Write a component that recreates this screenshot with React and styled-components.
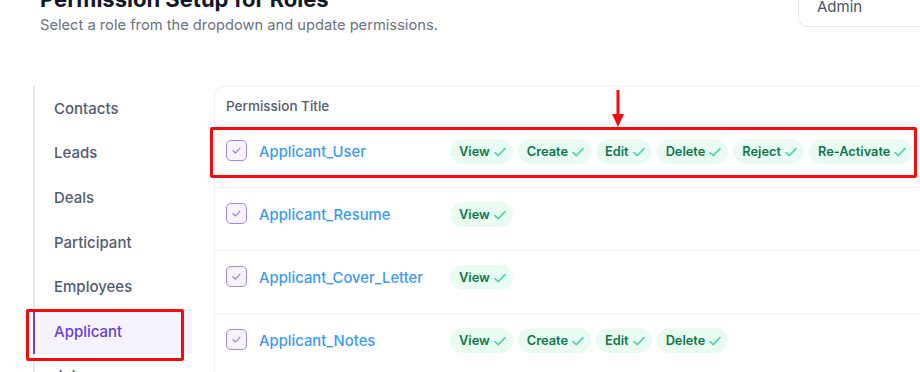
import React from 'react';
import styled, { createGlobalStyle } from 'styled-components';

const GlobalStyle = createGlobalStyle`
  body {
    margin: 0;
    background: #ffffff;
    font-family: Inter, "Noto Sans", Arial, sans-serif;
    overflow: hidden;
  }
`;

const Page = styled.div`
  width: 920px;
  height: 372px;
  overflow: hidden;
  position: relative;
  background: #fff;
`;

const Header = styled.header`
  display: flex;
  justify-content: space-between;
  align-items: flex-start;
  padding-left: 40px;
`;

const TitleBlock = styled.div`
  margin-top: -16px;
`;

const Title = styled.h1`
  margin: 0;
  font-size: 22px;
  line-height: 30px;
  font-weight: 700;
  color: #111827;
`;

const Subtitle = styled.p`
  margin: 0;
  font-size: 14.7px;
  line-height: 22px;
  color: #6b7280;
`;

const RoleSelect = styled.div`
  margin-top: -14px;
  margin-right: -40px;
  width: 162px;
  height: 41px;
  box-sizing: border-box;
  border: 1px solid #e5e7eb;
  border-radius: 9px;
  padding: 10px 0 0 18px;
  font-size: 15px;
  color: #4b5563;
`;

const Body = styled.div`
  display: flex;
  gap: 22px;
  margin-top: 50px;
  padding-left: 33px;
`;

const Sidebar = styled.nav`
  width: 159px;
  flex: none;
  border-left: 2px solid #e8e9ef;
  height: 300px;
  box-sizing: border-box;
`;

const NavItem = styled.div`
  height: 44.6px;
  display: flex;
  align-items: center;
  padding-left: 19px;
  margin-left: -2px;
  border-left: 2px solid ${p => (p.$active ? '#6d3fd6' : 'transparent')};
  background: ${p => (p.$active ? '#f6f3fe' : 'transparent')};
  color: ${p => (p.$active ? '#6b3fd4' : '#535b70')};
  font-size: 15px;
  font-weight: 500;
`;

const Table = styled.div`
  flex: 1;
  border: 1px solid #eef0f5;
  border-right: none;
  border-top-left-radius: 10px;
  height: 320px;
`;

const HeadRow = styled.div`
  height: 37px;
  display: flex;
  align-items: center;
  padding-left: 11px;
  font-size: 13.5px;
  font-weight: 500;
  color: #555d6e;
  border-bottom: 1px solid #eef0f5;
`;

const Row = styled.div`
  height: 63px;
  box-sizing: border-box;
  display: flex;
  align-items: center;
  padding: 0 0 9px 11px;
  border-bottom: 1px solid #eef0f5;
`;

const NameCell = styled.div`
  width: 224px;
  flex: none;
  display: flex;
  align-items: center;
  gap: 12px;
`;

const Check = styled.span`
  width: 21px;
  height: 21px;
  box-sizing: border-box;
  margin-top: -2px;
  border: 1.5px solid #a585e8;
  border-radius: 5px;
  background: #f7f4ff;
  display: flex;
  align-items: center;
  justify-content: center;
`;

const Name = styled.span`
  font-size: 14.8px;
  font-weight: 500;
  color: #3a9af4;
`;

const Tags = styled.div`
  display: flex;
  gap: 5px;
  flex: none;
`;

const Tag = styled.span`
  display: inline-flex;
  align-items: center;
  gap: 4px;
  height: 25px;
  padding: 0 7px 0 9px;
  border-radius: 13px;
  background: #eafbf2;
  color: #0c774b;
  font-size: 12.8px;
  font-weight: 600;
  white-space: nowrap;
  flex: none;
`;

const Annotation = styled.div`
  position: absolute;
  border: 3px solid #f20d0d;
  border-radius: 2px;
  box-sizing: border-box;
  pointer-events: none;
`;

const SideMark = styled(Annotation)`
  left: 26px;
  top: 309px;
  width: 158px;
  height: 52px;
`;

const RowMark = styled(Annotation)`
  left: 210px;
  top: 127px;
  width: 707px;
  height: 51px;
`;

const Arrow = styled.svg`
  position: absolute;
  left: 611px;
  top: 90px;
`;

const BoxCheck = () => (
  <svg width="11" height="11" viewBox="0 0 12 12" fill="none">
    <path d="M2.2 6.3 L4.8 8.8 L9.8 3.4" stroke="#9d86d9" strokeWidth="1.4" strokeLinecap="round" strokeLinejoin="round" />
  </svg>
);

const TagCheck = () => (
  <svg width="12" height="12" viewBox="0 0 12 12" fill="none">
    <path d="M1 6.6 L4.3 9.6 L11 2.6" stroke="#55d3b2" strokeWidth="1.7" strokeLinecap="round" strokeLinejoin="round" />
  </svg>
);

const navItems = ['Contacts', 'Leads', 'Deals', 'Participant', 'Employees', 'Applicant', 'Jobs'];

const permissions = [
  { name: 'Applicant_User', actions: ['View', 'Create', 'Edit', 'Delete', 'Reject', 'Re-Activate'] },
  { name: 'Applicant_Resume', actions: ['View'] },
  { name: 'Applicant_Cover_Letter', actions: ['View'] },
  { name: 'Applicant_Notes', actions: ['View', 'Create', 'Edit', 'Delete'] },
];

export default function App() {
  return (
    <Page>
      <GlobalStyle />
      <Header>
        <TitleBlock>
          <Title>Permission Setup for Roles</Title>
          <Subtitle>Select a role from the dropdown and update permissions.</Subtitle>
        </TitleBlock>
        <RoleSelect>Admin</RoleSelect>
      </Header>
      <Body>
        <Sidebar>
          {navItems.map(item => (
            <NavItem key={item} $active={item === 'Applicant'}>{item}</NavItem>
          ))}
        </Sidebar>
        <Table>
          <HeadRow>Permission Title</HeadRow>
          {permissions.map(p => (
            <Row key={p.name}>
              <NameCell>
                <Check><BoxCheck /></Check>
                <Name>{p.name}</Name>
              </NameCell>
              <Tags>
                {p.actions.map(a => (
                  <Tag key={a}>
                    {a}
                    <TagCheck />
                  </Tag>
                ))}
              </Tags>
            </Row>
          ))}
        </Table>
      </Body>
      <SideMark />
      <RowMark />
      <Arrow width="14" height="38" viewBox="0 0 14 38">
        <rect x="5.5" y="0" width="3" height="26" fill="#f20d0d" />
        <path d="M1 24 L13 24 L7 37 Z" fill="#f20d0d" />
      </Arrow>
    </Page>
  );
}
